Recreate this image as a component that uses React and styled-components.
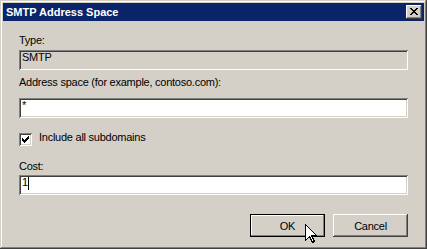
import React from 'react';
import styled, { createGlobalStyle } from 'styled-components';

const GlobalStyle = createGlobalStyle`
  html, body {
    margin: 0;
    padding: 0;
    background: #d4d0c8;
  }
  body {
    font-family: "Liberation Sans", Arial, sans-serif;
    font-size: 11px;
  }
`;

const raised = `
  box-shadow: inset -1px -1px #404040, inset 1px 1px #ffffff,
    inset -2px -2px #808080, inset 2px 2px #d4d0c8;
`;

const sunken = `
  box-shadow: inset 1px 1px #808080, inset -1px -1px #ffffff,
    inset 2px 2px #404040, inset -2px -2px #d4d0c8;
`;

const Window = styled.div`
  position: relative;
  width: 427px;
  height: 249px;
  box-sizing: border-box;
  padding: 3px;
  background: #d4d0c8;
  box-shadow: inset -1px -1px #404040, inset 1px 1px #d4d0c8,
    inset -2px -2px #808080, inset 2px 2px #ffffff;
  display: flex;
  flex-direction: column;
`;

const TitleBar = styled.div`
  height: 18px;
  flex-shrink: 0;
  background: #0a246a;
  display: flex;
  align-items: center;
  justify-content: space-between;
  padding: 0 2px 0 3px;
`;

const TitleText = styled.span`
  color: #fff;
  font-weight: bold;
  font-size: 11px;
  line-height: 13px;
`;

const CloseButton = styled.div`
  width: 16px;
  height: 14px;
  background: #d4d0c8;
  ${raised}
  display: flex;
  align-items: flex-start;
  justify-content: flex-start;
  padding: 3px 0 0 4px;
  box-sizing: border-box;
`;

const Content = styled.div`
  display: flex;
  flex-direction: column;
  padding: 0 16px;
`;

const Label = styled.div`
  margin-top: ${p => p.$top}px;
  height: 13px;
  line-height: 13px;
  color: #000;
  letter-spacing: -0.25px;
  white-space: nowrap;
`;

const Field = styled.div`
  margin-top: ${p => p.$top}px;
  height: 20px;
  box-sizing: border-box;
  padding: 1px 3px 0;
  line-height: 13px;
  background: ${p => (p.$readOnly ? '#d4d0c8' : '#ffffff')};
  ${sunken}
  color: #000;
  display: flex;
  align-items: flex-start;
  letter-spacing: -0.25px;
`;

const Caret = styled.span`
  display: inline-block;
  width: 1px;
  height: 13px;
  margin-top: 1px;
  background: #000;
`;

const CheckRow = styled.label`
  margin-top: ${p => p.$top}px;
  display: flex;
  align-items: flex-start;
  gap: 7px;
  height: 13px;
`;

const CheckBox = styled.span`
  width: 13px;
  height: 13px;
  margin-top: 1px;
  box-sizing: border-box;
  background: #fff;
  ${sunken}
  padding: 3px 0 0 3px;
  display: flex;
`;

const CheckText = styled.span`
  line-height: 13px;
  margin-top: -1px;
  letter-spacing: -0.25px;
`;

const ButtonRow = styled.div`
  margin-top: ${p => p.$top}px;
  display: flex;
  justify-content: flex-end;
  gap: 8px;
`;

const Button = styled.div`
  width: 75px;
  height: 23px;
  box-sizing: border-box;
  display: flex;
  align-items: center;
  justify-content: center;
  background: #d4d0c8;
  color: #000;
  letter-spacing: -0.25px;
  ${p =>
    p.$default
      ? `box-shadow: inset 0 0 0 1px #000, inset -2px -2px #808080, inset 2px 2px #ffffff;`
      : raised}
`;

const Cursor = styled.svg`
  position: absolute;
  left: 305px;
  top: 224px;
  shape-rendering: crispEdges;
`;

const Pixels = ({ rows, color = '#000' }) => (
  <svg
    width={rows[0].length}
    height={rows.length}
    shapeRendering="crispEdges"
    style={{ display: 'block' }}
  >
    {rows.map((row, y) =>
      row.split('').map((c, x) =>
        c === 'X' ? <rect key={`${x}-${y}`} x={x} y={y} width="1" height="1" fill={color} /> : null
      )
    )}
  </svg>
);

const closeGlyph = [
  'XX....XX',
  '.XX..XX.',
  '..XXXX..',
  '...XX...',
  '..XXXX..',
  '.XX..XX.',
  'XX....XX',
];

const checkGlyph = [
  '......X',
  '.....XX',
  'X...XXX',
  'XX.XXX.',
  'XXXXX..',
  '.XXX...',
  '..X....',
];

export default function App() {
  return (
    <>
      <GlobalStyle />
      <Window>
        <TitleBar>
          <TitleText>SMTP Address Space</TitleText>
          <CloseButton>
            <Pixels rows={closeGlyph} />
          </CloseButton>
        </TitleBar>
        <Content>
          <Label $top={13}>Type:</Label>
          <Field $top={3} $readOnly>SMTP</Field>
          <Label $top={6}>Address space (for example, contoso.com):</Label>
          <Field $top={9}>*</Field>
          <CheckRow $top={14}>
            <CheckBox>
              <Pixels rows={checkGlyph} />
            </CheckBox>
            <CheckText>Include all subdomains</CheckText>
          </CheckRow>
          <Label $top={15}>Cost:</Label>
          <Field $top={2}>
            1<Caret />
          </Field>
          <ButtonRow $top={19}>
            <Button $default>OK</Button>
            <Button>Cancel</Button>
          </ButtonRow>
        </Content>
        <Cursor width="13" height="21" viewBox="0 0 13 21">
          <path
            d="M0.5 0.5 L0.5 16.5 L4.5 12.5 L7.5 18.5 L9.5 17.5 L6.5 11.5 L11.5 11.5 Z"
            fill="#fff"
            stroke="#000"
            strokeWidth="1"
          />
        </Cursor>
      </Window>
    </>
  );
}
